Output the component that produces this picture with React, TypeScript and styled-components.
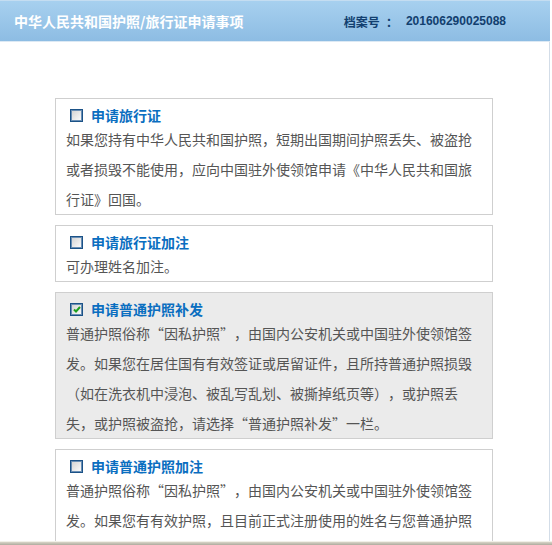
import styled, { createGlobalStyle } from 'styled-components';

const GlobalStyle = createGlobalStyle`
  html, body {
    margin: 0;
    padding: 0;
    background: #ffffff;
  }
  body {
    font-family: "Noto Sans CJK SC", "Liberation Sans", sans-serif;
    text-spacing-trim: space-all;
  }
`;

const Frame = styled.div`
  width: 552px;
  height: 545px;
  display: flex;
  flex-direction: column;
  overflow: hidden;
`;

const Viewport = styled.div`
  width: 550px;
  flex: 1;
  overflow: hidden;
  display: flex;
  flex-direction: column;
`;

const Header = styled.div`
  height: 40px;
  flex-shrink: 0;
  display: flex;
  align-items: center;
  justify-content: space-between;
  padding: 0 44px 0 14px;
  border-top: 1px solid #c4ddf1;
  border-bottom: 1px solid #dce9f4;
  background: linear-gradient(#a7d0ef, #8dbce3);
`;

const Title = styled.div`
  color: #ffffff;
  font-size: 14px;
  font-weight: 700;
  line-height: 40px;
`;

const FileNo = styled.div`
  display: flex;
  align-items: center;
  color: #123f6f;
  font-size: 12px;
  font-weight: 700;
`;

const Colon = styled.span`
  margin: 0 8px 0 6px;
`;

const Digits = styled.span`
  font-family: "Liberation Sans", Arial, sans-serif;
  font-size: 12px;
  font-weight: 700;
`;

const Content = styled.div`
  flex: 1;
  border-right: 1px solid #d3dde8;
  padding: 56px 0 0 55px;
  overflow: hidden;
`;

const Card = styled.div<{ $active?: boolean }>`
  width: 438px;
  box-sizing: border-box;
  border: 1px solid #cfcfcf;
  background: ${p => (p.$active ? '#ebebeb' : '#ffffff')};
  padding: 7px 10px 0;
  margin-bottom: 10px;
`;

const CardTitle = styled.div`
  display: flex;
  align-items: center;
  height: 18px;
  color: #0a6ec0;
  font-size: 14px;
  font-weight: 700;
  line-height: 18px;
`;

const Box = styled.span`
  width: 13px;
  height: 13px;
  box-sizing: border-box;
  margin: 0 8px 0 4px;
  border: 1px solid #1b5287;
  box-shadow: inset 0 0 0 1px #6a8fb5;
  background: linear-gradient(135deg, #d0d0d0, #ffffff);
  display: flex;
  align-items: center;
  justify-content: center;
`;

const Body = styled.div`
  color: #555555;
  font-size: 14px;
  line-height: 30px;
  text-spacing-trim: space-all;
`;

const Check = () => (
  <svg width="8" height="7" viewBox="0 0 8 7">
    <path d="M1 3.5 L3 5.5 L7 1" fill="none" stroke="#1fa01f" strokeWidth="2" />
  </svg>
);

const BottomBar = styled.div`
  height: 3px;
  flex-shrink: 0;
  border-top: 1px solid #f2f0e8;
  background: linear-gradient(#d8d5c8, #aeab9e);
`;

const items = [
  {
    title: '申请旅行证',
    text: '如果您持有中华人民共和国护照，短期出国期间护照丢失、被盗抢或者损毁不能使用，应向中国驻外使领馆申请《中华人民共和国旅行证》回国。',
  },
  {
    title: '申请旅行证加注',
    text: '可办理姓名加注。',
  },
  {
    title: '申请普通护照补发',
    text: '普通护照俗称“因私护照”，由国内公安机关或中国驻外使领馆签发。如果您在居住国有有效签证或居留证件，且所持普通护照损毁（如在洗衣机中浸泡、被乱写乱划、被撕掉纸页等），或护照丢失，或护照被盗抢，请选择“普通护照补发”一栏。',
    checked: true,
  },
  {
    title: '申请普通护照加注',
    text: '普通护照俗称“因私护照”，由国内公安机关或中国驻外使领馆签发。如果您有有效护照，且目前正式注册使用的姓名与您普通护照上的姓名不一致，请选择“普通护照加注”一栏。',
  },
];

export default function App() {
  return (
    <>
      <GlobalStyle />
      <Frame>
        <Viewport>
          <Header>
            <Title>中华人民共和国护照/旅行证申请事项</Title>
            <FileNo>
              <span>档案号</span>
              <Colon>：</Colon>
              <Digits>201606290025088</Digits>
            </FileNo>
          </Header>
          <Content>
            {items.map(item => (
              <Card key={item.title} $active={item.checked}>
                <CardTitle>
                  <Box>{item.checked && <Check />}</Box>
                  {item.title}
                </CardTitle>
                <Body>{item.text}</Body>
              </Card>
            ))}
          </Content>
        </Viewport>
        <BottomBar />
      </Frame>
    </>
  );
}
